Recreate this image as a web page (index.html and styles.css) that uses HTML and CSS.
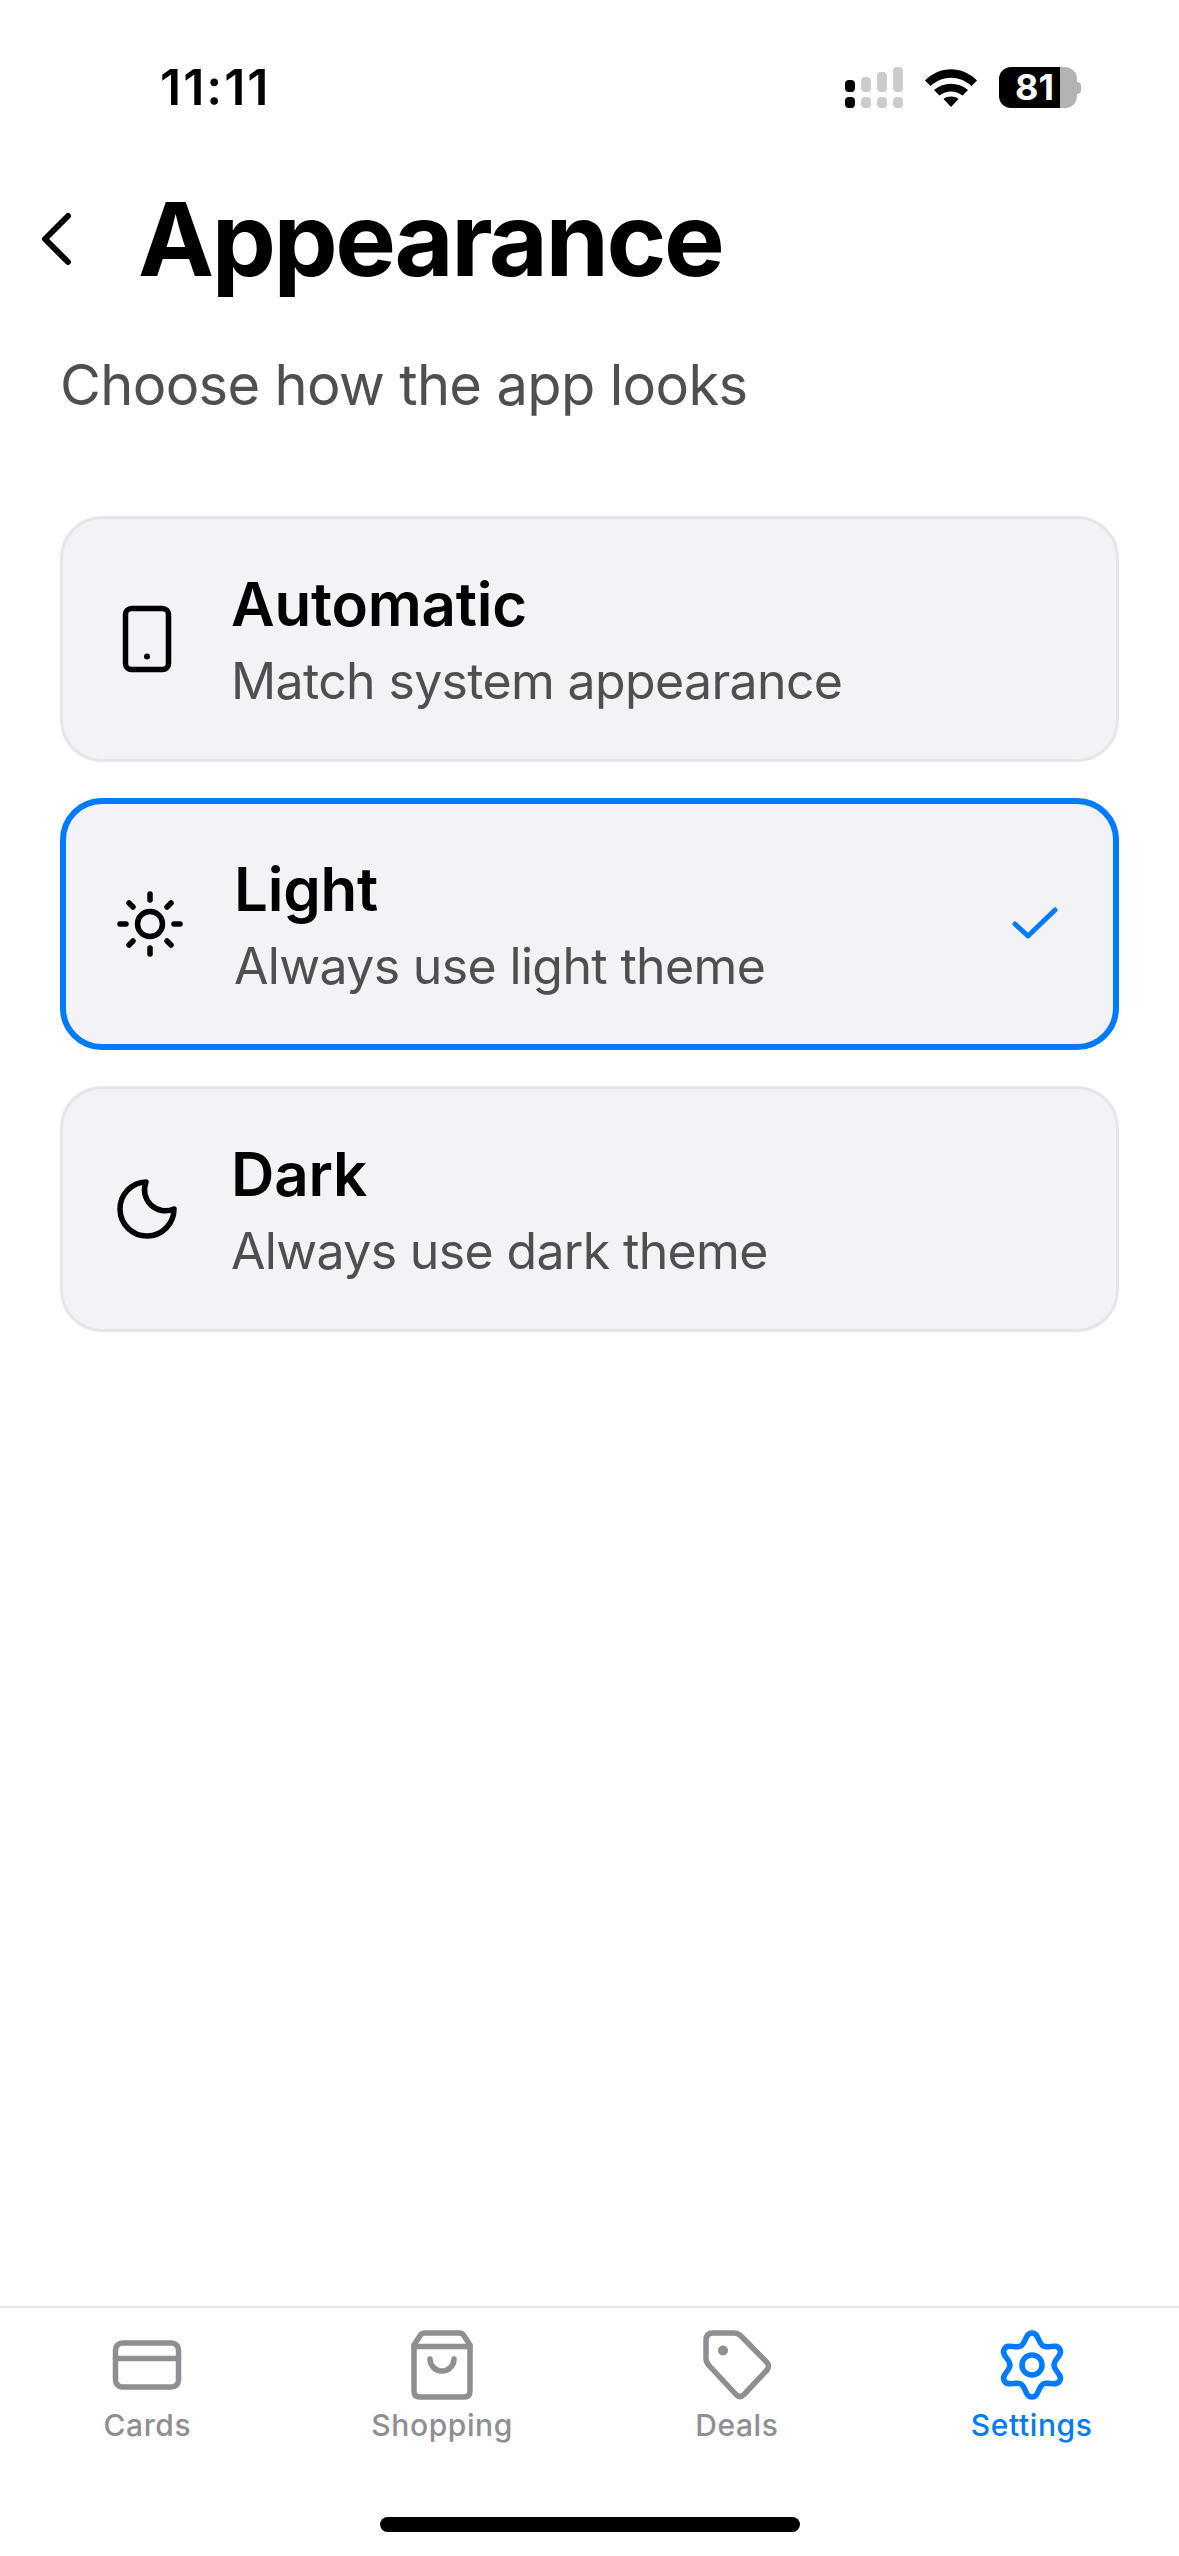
FILE: index.html
```html
<!DOCTYPE html>
<html lang="en">
<head>
<meta charset="utf-8">
<title>Appearance</title>
<link rel="stylesheet" href="styles.css">
</head>
<body>
<div class="page">
  <div class="status">
    <span class="time">11:11</span>
    <div class="status-icons">
      <svg class="signal" width="58" height="41" viewBox="0 0 58 41">
        <rect class="on" x="0" y="13" width="10" height="12" rx="4"/>
        <rect class="on" x="0" y="30" width="10" height="11" rx="4"/>
        <rect class="off" x="16" y="10" width="10" height="15" rx="4"/>
        <rect class="off" x="16" y="30" width="10" height="11" rx="4"/>
        <rect class="off" x="32" y="5" width="10" height="20" rx="4"/>
        <rect class="off" x="32" y="30" width="10" height="11" rx="4"/>
        <rect class="off" x="48" y="0" width="10" height="25" rx="4"/>
        <rect class="off" x="48" y="30" width="10" height="11" rx="4"/>
      </svg>
      <svg class="wifi" width="52" height="38" viewBox="0 0 52 38">
        <path d="M0 11.5 C15 -3.5 37 -3.5 52 11.5 L46.5 17 C34.500 6 17.500 6 5.500 17 Z"/>
        <path d="M9 21 C19 12.500 33 12.500 43 21 L37.500 26.500 C30.500 21 21.500 21 14.500 26.500 Z"/>
        <path d="M18.500 30 C23 26.800 29 26.800 33.500 30 L26 38 Z"/>
      </svg>
      <div class="battery">
        <div class="battery-body"><span class="battery-text">81</span></div>
        <div class="battery-nub"></div>
      </div>
    </div>
  </div>

  <div class="header">
    <svg class="back" width="72" height="72" viewBox="0 0 72 72"><path d="M48 13 L25 36 L48 59"/></svg>
    <h1 class="title">Appearance</h1>
  </div>
  <p class="subtitle">Choose how the app looks</p>

  <div class="options">
    <div class="option">
      <svg class="opt-icon" width="72" height="72" viewBox="-36 -36 72 72">
        <rect x="-21.500" y="-30.500" width="43" height="61" rx="6"/>
        <circle class="dot" cx="0" cy="17.500" r="3"/>
      </svg>
      <div class="opt-text">
        <div class="opt-title">Automatic</div>
        <div class="opt-sub">Match system appearance</div>
      </div>
    </div>
    <div class="option selected">
      <svg class="opt-icon" width="72" height="72" viewBox="-36 -36 72 72">
        <circle cx="0" cy="0" r="12.500"/>
        <path d="M0 -30V-24M0 24V30M-30 0H-24M24 0H30M-21 -21L-17 -17M17 17L21 21M-21 21L-17 17M17 -17L21 -21"/>
      </svg>
      <div class="opt-text">
        <div class="opt-title">Light</div>
        <div class="opt-sub">Always use light theme</div>
      </div>
      <svg class="check" width="48" height="36" viewBox="0 0 48 36"><path d="M3 18 L16 30 L43 4"/></svg>
    </div>
    <div class="option">
      <svg class="opt-icon" width="72" height="72" viewBox="-36 -36 72 72">
        <path d="M-1 -27 A27 27 0 1 0 27 0 A21 21 0 0 1 -1 -27 Z"/>
      </svg>
      <div class="opt-text">
        <div class="opt-title">Dark</div>
        <div class="opt-sub">Always use dark theme</div>
      </div>
    </div>
  </div>

  <div class="spacer"></div>

  <div class="tabbar">
    <div class="tabs">
      <div class="tab">
        <svg class="tab-icon" width="84" height="84" viewBox="-42 -42 84 84">
          <rect x="-31.500" y="-22" width="63" height="44" rx="7"/>
          <path d="M-31.500 -6.500H31.500"/>
        </svg>
        <span class="tab-label">Cards</span>
      </div>
      <div class="tab">
        <svg class="tab-icon" width="84" height="84" viewBox="-42 -42 84 84">
          <path d="M-17 -32 H17 Q20 -32 21.500 -30 L28 -20 V26 Q28 32 22 32 H-22 Q-28 32 -28 26 V-20 L-21.500 -30 Q-20 -32 -17 -32 Z"/>
          <path d="M-28 -18.500 H28"/>
          <path d="M-12 -6 A12 12 0 0 0 12 -6"/>
        </svg>
        <span class="tab-label">Shopping</span>
      </div>
      <div class="tab">
        <svg class="tab-icon" width="84" height="84" viewBox="-42 -42 84 84">
          <path d="M-24 -32 H-3 Q1 -32 4 -29 L30 -2.500 Q33 1 30 5 L7 29.500 Q3 33.500 -1 29.500 L-28 0.500 Q-31 -2.500 -31 -7 V-25 Q-31 -32 -24 -32 Z"/>
          <circle class="dot" cx="-14" cy="-14.500" r="5"/>
        </svg>
        <span class="tab-label">Deals</span>
      </div>
      <div class="tab active">
        <svg class="tab-icon" width="84" height="84" viewBox="-42 -42 84 84">
          <path d="M0 -32 C7 -32 5.800 -22.050 11 -19.050 C16.200 -16.050 24.210 -22.060 27.710 -16 C31.210 -9.940 22 -6 22 0 C22 6 31.210 9.940 27.710 16 C24.210 22.060 16.200 16.050 11 19.050 C5.800 22.050 7 32 0 32 C-7 32 -5.800 22.050 -11 19.050 C-16.200 16.050 -24.210 22.060 -27.710 16 C-31.210 9.940 -22 6 -22 0 C-22 -6 -31.210 -9.940 -27.710 -16 C-24.210 -22.060 -16.200 -16.050 -11 -19.050 C-5.800 -22.050 -7 -32 0 -32 Z"/>
          <circle cx="0" cy="0" r="10"/>
        </svg>
        <span class="tab-label">Settings</span>
      </div>
    </div>
    <div class="home-indicator"></div>
  </div>
</div>
</body>
</html>
```

FILE: styles.css
```css
* { box-sizing: border-box; }
html, body { margin: 0; padding: 0; background: #fff; }
body { font-family: Inter, "Noto Sans", sans-serif; color: #000; }

.page { width: 1179px; height: 2556px; display: flex; flex-direction: column; overflow: hidden; }

.status { height: 178px; padding: 67px 98px 0 160px; display: flex; justify-content: space-between; align-items: flex-start; }
.time { font-size: 50px; font-weight: 600; line-height: 41px; letter-spacing: 2px; }
.status-icons { display: flex; align-items: flex-start; gap: 22px; }
.signal .on { fill: #000; }
.signal .off { fill: #ccc; }
.wifi { margin-top: 2px; fill: #000; }
.battery { display: flex; align-items: center; margin-left: 0; }
.battery-body { width: 78px; height: 41px; border-radius: 12px; background: linear-gradient(to right, #000 0, #000 61px, #b3b3b3 61px); display: flex; }
.battery-text { width: 61px; padding-left: 10px; text-align: center; color: #fff; font-size: 36px; font-weight: 700; line-height: 41px; }
.battery-nub { width: 4px; height: 12px; background: #b3b3b3; border-radius: 0 6px 6px 0; }

.header { display: flex; align-items: center; padding-left: 20px; gap: 46px; }
.back { fill: none; stroke: #000; stroke-width: 6; stroke-linecap: round; stroke-linejoin: round; }
.title { margin: 0; font-size: 102px; line-height: 122px; font-weight: 700; letter-spacing: -2.5px; }
.subtitle { margin: 51px 0 0; padding-left: 60px; font-size: 56px; line-height: 68px; color: #4f4f4f; letter-spacing: -0.65px; }

.options { margin-top: 97px; padding: 0 60px; display: flex; flex-direction: column; gap: 36px; }
.option { display: flex; align-items: center; gap: 48px; padding: 48px 48px; background: #f2f2f7; border: 3px solid #e5e5ea; border-radius: 42px; }
.option.selected { border: 6px solid #007aff; }
.opt-icon { flex: none; fill: none; stroke: #000; stroke-width: 5.5; stroke-linecap: round; stroke-linejoin: round; }
.opt-icon .dot { fill: #000; stroke: none; }
.opt-text { flex: 1; display: flex; flex-direction: column; gap: 10px; }
.opt-title { font-size: 60px; line-height: 74px; font-weight: 600; letter-spacing: -0.2px; }
.opt-sub { font-size: 50px; line-height: 60px; color: #4f4f4f; letter-spacing: -0.65px; }
.check { flex: none; margin-right: 5px; fill: none; stroke: #007aff; stroke-width: 5; stroke-linecap: round; stroke-linejoin: round; }

.spacer { flex: 1; }

.tabbar { border-top: 2px solid #e5e5ea; padding-top: 15px; display: flex; flex-direction: column; align-items: center; }
.tabs { width: 100%; display: grid; grid-template-columns: repeat(4, 1fr); }
.tab { display: flex; flex-direction: column; align-items: center; color: #8e8e93; }
.tab.active { color: #007aff; }
.tab-icon { fill: none; stroke: currentColor; stroke-width: 5.5; stroke-linecap: round; stroke-linejoin: round; }
.tab-icon .dot { fill: currentColor; stroke: none; }
.tab-label { font-size: 30px; line-height: 36px; font-weight: 500; letter-spacing: 0.6px; }
.home-indicator { width: 420px; height: 15px; margin: 74px 0 24px; border-radius: 8px; background: #000; }
```
